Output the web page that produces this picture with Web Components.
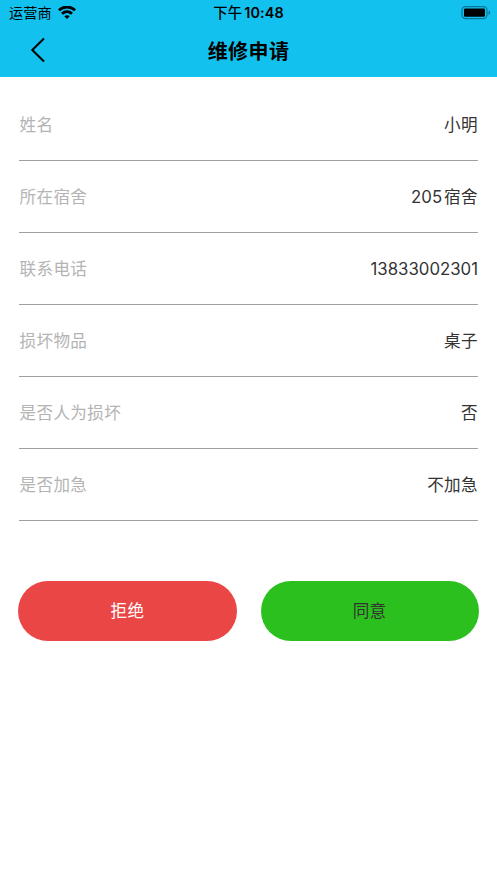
<!DOCTYPE html>
<html lang="zh-CN">
<head>
<meta charset="utf-8">
<title>维修申请</title>
<style>
html, body { margin: 0; background: #fff; }
body { font-family: Inter, "Noto Sans CJK SC", sans-serif; color: #333; }
</style>
</head>
<body>
<repair-page></repair-page>
<script>
const define = (name, html) => {
  const template = document.createElement('template');
  template.innerHTML = html;
  customElements.define(name, class extends HTMLElement {
    constructor() {
      super();
      this.attachShadow({ mode: 'open' }).append(template.content.cloneNode(true));
    }
  });
};

define('status-bar', `
<style>
:host { display: grid; grid-template-columns: 1fr auto 1fr; align-items: center; height: 25px; padding: 0 6px 0 9px; color: #000; font-size: 14.2px; line-height: 25px; }
.left { display: flex; align-items: center; gap: 6px; }
.time { font-weight: 600; font-size: 14.4px; display: flex; gap: 2px; letter-spacing: .1px; margin-left: -3px; }
::slotted(.period) { font-weight: 500; }
.battery { justify-self: end; }
svg { display: block; }
</style>
<div class="left"><span><slot name="carrier"></slot></span>
<svg width="18" height="14" viewBox="0 0 18 14" fill="none" stroke="#000" stroke-width="2.8"><path d="M.9 4.3C5.5-.1 12.5-.1 17.1 4.3M4 7.8C7 5 11 5 14 7.8"/><path d="M6.3 10.3Q9 8 11.7 10.3L9 13.1Z" fill="#000" stroke="none"/></svg></div>
<div class="time"><slot></slot></div>
<svg class="battery" width="30" height="14" viewBox="0 0 30 14"><rect x="1" y=".6" width="25" height="12" rx="3.6" fill="none" stroke="#08779a" stroke-width="1.2"/><rect x="3" y="2.4" width="21" height="8.4" rx="1.2"/><path d="M27.5 4.5Q29.2 5.1 29.2 6.7T27.5 8.9Z" fill="#08779a"/></svg>`);

define('nav-bar', `
<style>
:host { display: grid; grid-template-columns: 1fr auto 1fr; align-items: center; height: 52px; color: #000; }
svg { display: block; margin: -2px 0 0 30px; }
h1 { margin: 0; padding-top: 2px; font-size: 20px; line-height: 30px; font-weight: 700; letter-spacing: .4px; }
</style>
<svg width="16" height="26" viewBox="0 0 16 26" fill="none" stroke="#000" stroke-width="2"><path d="M14 1.5 2.3 13 14 24.5"/></svg>
<h1><slot></slot></h1>`);

define('form-row', `
<style>
:host { display: flex; justify-content: space-between; align-items: center; height: 71px; border-bottom: 1px solid #a0a0a0; font-size: 16.6px; line-height: 25px; letter-spacing: .35px; }
.label { color: #b4b4b4; padding: 2px 0 0 .5px; }
.value { color: #333; display: flex; gap: 2px; padding-top: 2px; }
::slotted(.num) { letter-spacing: 0; font-size: 16.8px; }
</style>
<span class="label"><slot name="label"></slot></span><span class="value"><slot></slot></span>`);

define('pill-button', `
<style>
:host { display: block; flex: 1; }
button { display: block; width: 100%; height: 60px; border: 0; padding: 0 0 1px; border-radius: 30px; background: var(--fill); color: var(--ink); font: inherit; font-size: 16.6px; letter-spacing: .3px; }
</style>
<button type="button"><slot></slot></button>`);

define('repair-page', `
<style>
:host { display: block; min-height: 883px; background: #fff; }
header { background: #13c1ef; }
main { padding: 12px 19px 0; }
footer { display: flex; gap: 24px; padding: 59.5px 18.3px 0; }
</style>
<header>
<status-bar><span slot="carrier">运营商</span><span class="period">下午</span><span>10:48</span></status-bar>
<nav-bar>维修申请</nav-bar>
</header>
<main>
<form-row><span slot="label">姓名</span><span>小明</span></form-row>
<form-row><span slot="label">所在宿舍</span><span class="num">205</span><span>宿舍</span></form-row>
<form-row><span slot="label">联系电话</span><span class="num">13833002301</span></form-row>
<form-row><span slot="label">损坏物品</span><span>桌子</span></form-row>
<form-row><span slot="label">是否人为损坏</span><span>否</span></form-row>
<form-row><span slot="label">是否加急</span><span>不加急</span></form-row>
</main>
<footer>
<pill-button style="--fill:#eb4646;--ink:#fff">拒绝</pill-button>
<pill-button style="--fill:#2bc01d;--ink:#333">同意</pill-button>
</footer>`);
</script>
</body>
</html>
